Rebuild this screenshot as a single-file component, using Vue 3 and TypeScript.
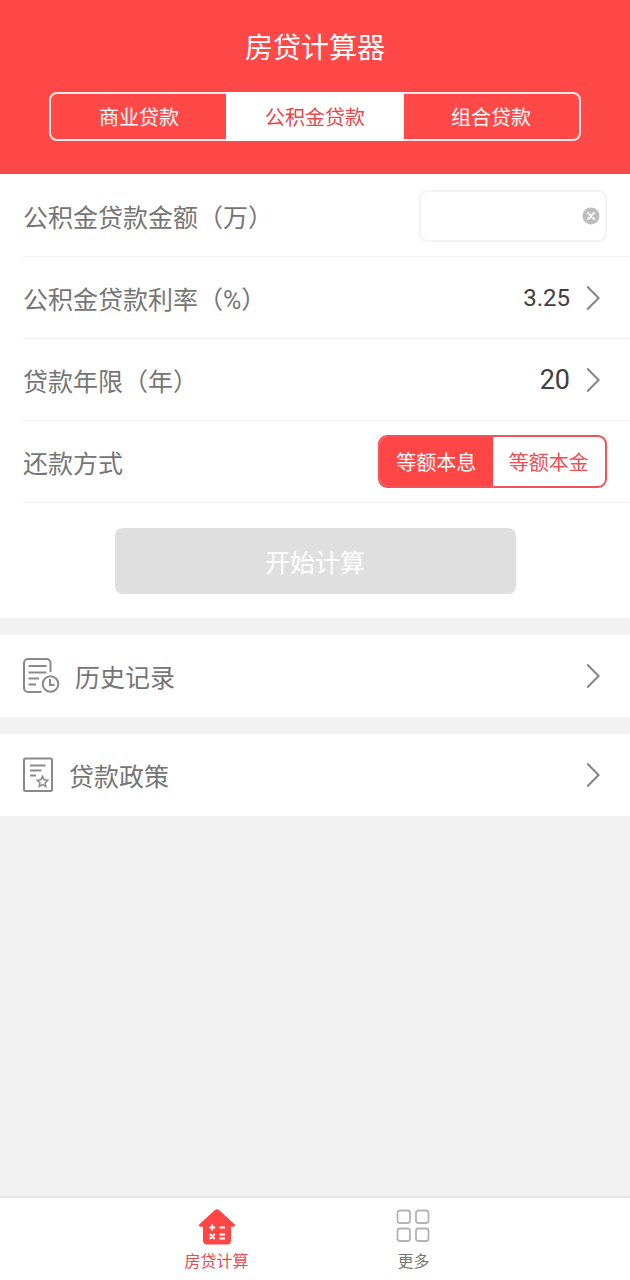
<script setup lang="ts">
import { ref } from 'vue'

const loanTypes = ['商业贷款', '公积金贷款', '组合贷款']
const loanType = ref('公积金贷款')

const methods = ['等额本息', '等额本金']
const method = ref('等额本息')

const amount = ref('')
const rate = ref('3.25')
const years = ref(20)
</script>

<template>
  <div class="page">
    <header class="top">
      <h1 class="title">房贷计算器</h1>
      <div class="tabs" role="tablist">
        <button
          v-for="t in loanTypes"
          :key="t"
          type="button"
          role="tab"
          class="tab"
          :class="{ active: t === loanType }"
          :aria-selected="t === loanType"
          @click="loanType = t"
        >{{ t }}</button>
      </div>
    </header>

    <main class="content">
      <form class="form" @submit.prevent>
        <div class="row">
          <label for="amount">公积金贷款金额（万）</label>
          <div class="field">
            <input id="amount" v-model="amount" type="text" inputmode="decimal" />
            <button type="button" class="clear" aria-label="清除" @click="amount = ''">
              <svg width="18" height="18" viewBox="0 0 18 18">
                <circle cx="9" cy="9" r="8.5" fill="#bdbdbd" />
                <path d="M6 6l6 6M12 6l-6 6" stroke="#fff" stroke-width="1.8" stroke-linecap="round" />
              </svg>
            </button>
          </div>
        </div>
        <button type="button" class="row">
          <span>公积金贷款利率（<span class="latin">%</span>）</span>
          <span class="value">{{ rate }}</span>
          <svg class="chevron" width="14" height="26" viewBox="0 0 14 26"><path d="M1.2 1.5L12.6 13 1.2 24.5" /></svg>
        </button>
        <button type="button" class="row">
          <span>贷款年限（年）</span>
          <span class="value large">{{ years }}</span>
          <svg class="chevron" width="14" height="26" viewBox="0 0 14 26"><path d="M1.2 1.5L12.6 13 1.2 24.5" /></svg>
        </button>
        <div class="row">
          <span id="method-label">还款方式</span>
          <div class="methods" role="radiogroup" aria-labelledby="method-label">
            <label v-for="m in methods" :key="m" class="method" :class="{ active: m === method }">
              <input v-model="method" type="radio" name="method" :value="m" />{{ m }}
            </label>
          </div>
        </div>
        <button type="submit" class="submit" :disabled="!amount">开始计算</button>
      </form>

      <a class="link" href="#history">
        <svg class="link-icon" width="38" height="38" viewBox="0 0 38 38">
          <path d="M28.5 15V6a4 4 0 0 0-4-4H6a4 4 0 0 0-4 4v25a4 4 0 0 0 4 4h13.5" />
          <path d="M6.5 9h18M6.5 15.5h18M6.5 21.5h10.5M6.5 27.5h7.5" />
          <circle cx="28.5" cy="27" r="7.8" />
          <path d="M28 22v6h4.5" />
        </svg>
        <span>历史记录</span>
        <svg class="chevron" width="14" height="26" viewBox="0 0 14 26"><path d="M1.2 1.5L12.6 13 1.2 24.5" /></svg>
      </a>
      <a class="link" href="#policy">
        <svg class="link-icon" width="32" height="38" viewBox="0 0 32 38">
          <rect x="2" y="2.5" width="28" height="32.5" rx="1.5" />
          <path d="M8 9.5h15.5M8 14.5h11.5M8 19.5h6" />
          <path class="star" d="M20.5 20.3l1.6 3.4 3.7.5-2.7 2.6.7 3.7-3.3-1.800-3.300 1.800.7-3.700-2.700-2.600 3.700-.5z" />
        </svg>
        <span>贷款政策</span>
        <svg class="chevron" width="14" height="26" viewBox="0 0 14 26"><path d="M1.2 1.5L12.6 13 1.2 24.5" /></svg>
      </a>
    </main>

    <nav class="bottom">
      <a class="nav-item active" href="#calc" aria-current="page">
        <svg width="38" height="36" viewBox="0 0 38 36">
          <path
            d="M16.6 1.2a3.800 3.800 0 0 1 4.800 0L36.500 15.300c1.200 1.200.6 2.500-.9 2.500H33V31.500a4 4 0 0 1-4 4H9a4 4 0 0 1-4-4V17.800H2.400c-1.500 0-2.100-1.300-.9-2.500z"
            fill="#ff4646"
          />
          <path
            d="M11.200 18.500h6M14.200 15.500v6M21.500 18.500h5.500M11.700 25l5 5M16.700 25l-5 5M21.500 25.500h5.500M21.500 29.500h5.500"
            stroke="#fff"
            stroke-width="1.9"
            fill="none"
          />
        </svg>
        <span>房贷计算</span>
      </a>
      <a class="nav-item" href="#more">
        <svg width="38" height="36" viewBox="0 0 38 36" fill="none" stroke="#b4b4b4" stroke-width="1.8">
          <rect x="3.5" y="1.500" width="12.5" height="12.5" rx="2.5" />
          <rect x="22" y="1.500" width="12.5" height="12.5" rx="2.5" />
          <rect x="3.5" y="19.500" width="12.5" height="12.5" rx="2.5" />
          <rect x="22" y="19.500" width="12.5" height="12.5" rx="2.5" />
        </svg>
        <span>更多</span>
      </a>
    </nav>
  </div>
</template>

<style>
body {
  background: #f1f1f1;
}
</style>

<style scoped>
.page {
  display: flex;
  flex-direction: column;
  min-height: 100vh;
  background: #f1f1f1;
  color: #757575;
  font-family: 'Noto Sans CJK SC', sans-serif;
}
.page *,
.page {
  box-sizing: border-box;
}
button {
  font-family: inherit;
  border: 0;
  padding: 0;
  background: none;
  cursor: pointer;
}
a {
  color: inherit;
  text-decoration: none;
}
svg {
  display: block;
  flex: none;
}
.top {
  background: #ff4848;
  padding: 26px 49px 33px;
}
.title {
  margin: 0 0 26px;
  color: #fff;
  font-size: 28px;
  line-height: 40px;
  font-weight: 400;
  text-align: center;
}
.tabs {
  display: grid;
  grid-template-columns: repeat(3, 1fr);
  height: 49px;
  border: 2px solid #ffe6e6;
  border-radius: 8px;
  background: #ff4848;
}
.tab {
  color: #fff;
  font-size: 20px;
  line-height: 28px;
}
.tab.active {
  margin: -2px -1px;
  background: #fff;
  color: #e8454a;
}
.content {
  flex: 1;
}
.form {
  display: flex;
  flex-direction: column;
  background: #fff;
  padding: 1px 0 24px;
}
.row {
  display: flex;
  align-items: center;
  height: 82px;
  margin-left: 23px;
  padding-right: 23px;
  border-bottom: 1px solid #f2f2f2;
  color: #757575;
  font-size: 25px;
  line-height: 36px;
  text-align: left;
}
.latin,
.value {
  font-family: Roboto, sans-serif;
}
.latin {
  line-height: 1;
}
.field {
  display: flex;
  align-items: center;
  width: 188px;
  height: 52px;
  margin-left: auto;
  padding: 0 5px 0 12px;
  border: 2px solid #f3f3f3;
  border-radius: 8px;
}
.field input {
  flex: 1;
  min-width: 0;
  border: 0;
  outline: 0;
  padding: 0;
  background: none;
  color: #404040;
  font-family: Roboto, sans-serif;
  font-size: 24px;
}
.value {
  margin-left: auto;
  margin-right: 16px;
  color: #404040;
  font-size: 24px;
}
.value.large {
  font-size: 27px;
}
.chevron {
  margin-right: 7px;
  fill: none;
  stroke: #858585;
  stroke-width: 2;
}
.methods {
  display: flex;
  width: 229px;
  height: 53px;
  margin-left: auto;
  border: 2px solid #f0535a;
  border-radius: 9px;
  background: #fff;
  overflow: hidden;
}
.method {
  flex: 1;
  display: flex;
  align-items: center;
  justify-content: center;
  color: #ec4f55;
  font-size: 20px;
  line-height: 28px;
  cursor: pointer;
}
.method.active {
  background: #ff4646;
  color: #fff;
}
.method input {
  appearance: none;
  width: 0;
  height: 0;
  margin: 0;
}
.submit {
  align-self: center;
  width: 401px;
  max-width: 90%;
  height: 66px;
  margin-top: 25px;
  border-radius: 8px;
  background: #ff4848;
  color: #fff;
  font-size: 25px;
  line-height: 36px;
}
.submit:disabled {
  background: #dfdfdf;
}
.link {
  display: flex;
  align-items: center;
  height: 82px;
  margin-top: 17px;
  padding: 0 23px 0 22px;
  background: #fff;
  font-size: 25px;
  line-height: 36px;
}
.link-icon {
  margin-right: 15px;
  fill: none;
  stroke: #8a8a8a;
  stroke-width: 2;
}
.link-icon .star {
  stroke-width: 1.5;
}
.link .chevron {
  margin-left: auto;
}
.bottom {
  display: flex;
  justify-content: center;
  height: 84px;
  padding-top: 11px;
  border-top: 2px solid #e8e8e8;
  background: #fff;
}
.nav-item {
  display: flex;
  flex-direction: column;
  align-items: center;
  gap: 3px;
  width: 31.25%;
  font-size: 16px;
  line-height: 24px;
}
.nav-item.active {
  color: #ec4a50;
}
</style>
